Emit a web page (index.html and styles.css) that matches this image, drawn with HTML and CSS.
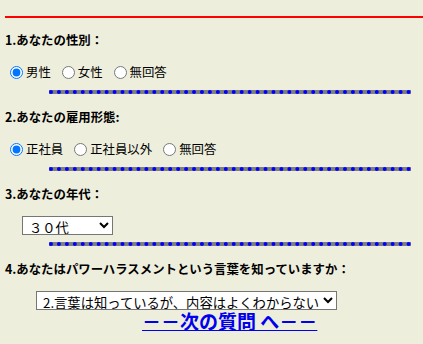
FILE: index.html
```html
<!DOCTYPE html>
<html lang="ja">
<head>
    <meta charset="UTF-8">
    <title>アンケート</title>
    <link rel="stylesheet" href="styles.css">
</head>
<body>
    <hr class="topline">

    <form class="survey">
        <p class="qtitle first">1.あなたの性別：</p>
        <div class="answers">
            <label><input type="radio" name="sex" checked>男性</label>
            <label><input type="radio" name="sex">女性</label>
            <label><input type="radio" name="sex">無回答</label>
        </div>
        <hr class="dots">

        <p class="qtitle">2.あなたの雇用形態:</p>
        <div class="answers">
            <label><input type="radio" name="job" checked>正社員</label>
            <label><input type="radio" name="job">正社員以外</label>
            <label><input type="radio" name="job">無回答</label>
        </div>
        <hr class="dots">

        <p class="qtitle">3.あなたの年代：</p>
        <div class="pick">
            <select class="age">
                <option>１０代</option>
                <option>２０代</option>
                <option selected>３０代</option>
                <option>４０代</option>
                <option>５０代</option>
                <option>６０代以上</option>
            </select>
        </div>
        <hr class="dots near">

        <p class="qtitle">4.あなたはパワーハラスメントという言葉を知っていますか：</p>
        <div class="pick">
            <select class="know">
                <option>1.言葉も内容も知っている</option>
                <option selected>2.言葉は知っているが、内容はよくわからない</option>
                <option>3.知らない</option>
            </select>
        </div>
        <a class="next" href="#">－－次の質問 へ－－</a>
    </form>
</body>
</html>
```

FILE: styles.css
```css
body {
    margin: 0;
    padding: 0 0 0 5px;
    background-color: #eeeedd;
    color: #000;
    font-family: "Noto Sans CJK JP", sans-serif;
    font-size: 12.4px;
    line-height: 18px;
}
.topline {
    margin: 16px 0 0;
    height: 2px;
    border: none;
    background-color: red;
}
.qtitle {
    margin: 14px 0 0;
    font-weight: bold;
}
.qtitle.first {
    margin-top: 13px;
}
.answers {
    display: flex;
    align-items: center;
    height: 18px;
    margin-top: 14px;
}
.answers label {
    display: flex;
    align-items: center;
    margin-right: 6px;
}
.answers input {
    margin: 0 3px 0 5px;
    width: 13px;
    height: 13px;
}
/* 点線の区切り */
.dots {
    margin: 9px 12px 0 44px;
    height: 0;
    border: none;
    border-top: 4px dotted blue;
    background-color: gray;
}
.dots.near {
    margin-top: 7px;
}
.pick {
    margin-top: 13px;
    height: 19px;
}
select {
    font-family: "Noto Sans CJK JP", sans-serif;
    font-size: 13.3px;
    height: 19px;
    padding: 0 0 0 2px;
    background-color: #fff;
    color: #000;
}
.age {
    width: 91px;
    margin-left: 17px;
}
.know {
    width: 301px;
    margin-left: 31px;
}
.next {
    display: inline-block;
    margin: 0 0 0 137px;
    font-size: 19px;
    line-height: 21px;
    font-weight: bold;
    color: #0000ee;
}
```
